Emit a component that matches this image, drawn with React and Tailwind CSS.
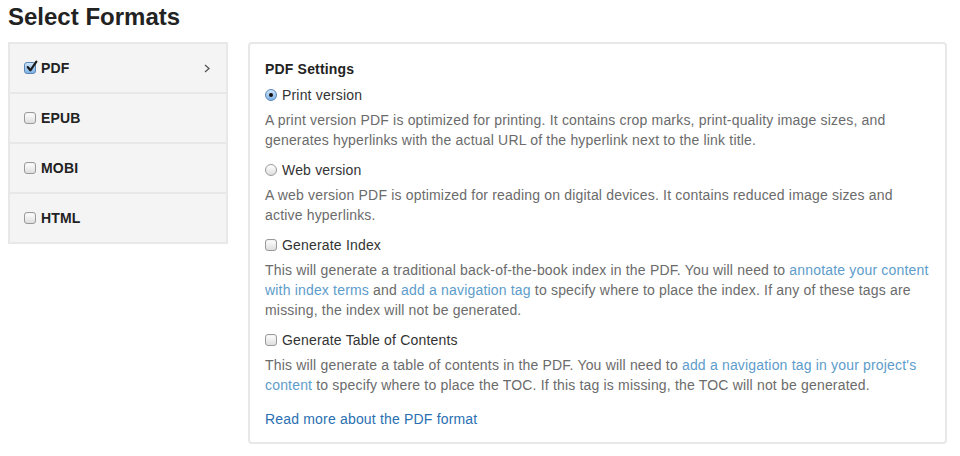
const formats = [
  { name: 'PDF', checked: true, active: true },
  { name: 'EPUB' },
  { name: 'MOBI' },
  { name: 'HTML' },
]

function Checkbox({ checked }) {
  if (checked) {
    return (
      <span className="relative inline-block w-[12px] h-[12px] shrink-0 rounded-[3px] border border-[#5a86b8] bg-gradient-to-b from-[#cfe4f8] to-[#7fb2e6]">
        <svg viewBox="0 0 12 12" className="absolute left-[0px] top-[-3px] w-[13px] h-[13px]">
          <path d="M2.5 6.5 L5 9.5 L10.5 1.5" fill="none" stroke="#1a1a1a" strokeWidth="2" strokeLinecap="round" strokeLinejoin="round" />
        </svg>
      </span>
    )
  }
  return (
    <span className="inline-block w-[12px] h-[12px] shrink-0 rounded-[3px] border border-[#9a9a9a] bg-gradient-to-b from-[#ffffff] to-[#dedede] shadow-[inset_0_1px_1px_rgba(0,0,0,0.05)]" />
  )
}

function Radio({ checked }) {
  if (checked) {
    return (
      <span className="flex items-center justify-center w-[12px] h-[12px] shrink-0 rounded-full border border-[#5a86b8] bg-gradient-to-b from-[#cfe4f8] to-[#7fb2e6]">
        <span className="w-[4px] h-[4px] rounded-full bg-[#111]" />
      </span>
    )
  }
  return (
    <span className="inline-block w-[12px] h-[12px] shrink-0 rounded-full border border-[#9a9a9a] bg-gradient-to-b from-[#ffffff] to-[#dedede]" />
  )
}

function Option({ control, label, children }) {
  return (
    <div>
      <div className="flex items-center gap-[5px] h-5 text-[#333]">
        {control}
        <span>{label}</span>
      </div>
      <p className="mt-[5px] text-[#6b6b6b]">{children}</p>
    </div>
  )
}

function A({ children }) {
  return <a href="#" className="text-[#5d9ccb]">{children}</a>
}

export default function App() {
  return (
    <div className="w-[960px] h-[456px] bg-white pl-[8px] text-[14px] leading-5 tracking-[0.18px] overflow-hidden" style={{ fontFamily: '"Liberation Sans", Arial, sans-serif' }}>
      <h1 className="pt-[3px] text-[24px] leading-[28px] font-bold tracking-normal text-[#222]">Select Formats</h1>
      <div className="mt-[11px] flex items-start gap-[20px]">
        <ul className="w-[220px] border-2 border-[#e8e8e8] bg-[#f4f4f4]">
          {formats.map((f, i) => (
            <li key={f.name} className={`flex items-center h-[48px] px-[14px] ${i > 0 ? 'border-t-2 border-[#e8e8e8] h-[50px]' : ''}`}>
              <Checkbox checked={f.checked} />
              <span className="ml-[5px] font-bold text-[#222]">{f.name}</span>
              {f.active && (
                <svg viewBox="0 0 6 9" className="ml-auto mr-[2px] w-[6px] h-[9px]">
                  <path d="M1 1 L5 4.5 L1 8" fill="none" stroke="#555" strokeWidth="1.3" />
                </svg>
              )}
            </li>
          ))}
        </ul>
        <div className="w-[699px] border-2 border-[#e8e8e8] rounded-[4px] bg-white px-[15px] pt-[15px] pb-[13px]">
          <h2 className="font-bold text-[#222] mb-[6px]">PDF Settings</h2>
          <div className="flex flex-col gap-[10px]">
            <Option control={<Radio checked />} label="Print version">
              A print version PDF is optimized for printing. It contains crop marks, print-quality image sizes, and generates hyperlinks with the actual URL of the hyperlink next to the link title.
            </Option>
            <Option control={<Radio />} label="Web version">
              A web version PDF is optimized for reading on digital devices. It contains reduced image sizes and active hyperlinks.
            </Option>
            <Option control={<Checkbox />} label="Generate Index">
              This will generate a traditional back-of-the-book index in the PDF. You will need to <A>annotate your content with index terms</A> and <A>add a navigation tag</A> to specify where to place the index. If any of these tags are missing, the index will not be generated.
            </Option>
            <Option control={<Checkbox />} label="Generate Table of Contents">
              This will generate a table of contents in the PDF. You will need to <A>add a navigation tag in your project's content</A> to specify where to place the TOC. If this tag is missing, the TOC will not be generated.
            </Option>
          </div>
          <a href="#" className="block mt-[14px] text-[#2a6fb2]">Read more about the PDF format</a>
        </div>
      </div>
    </div>
  )
}
